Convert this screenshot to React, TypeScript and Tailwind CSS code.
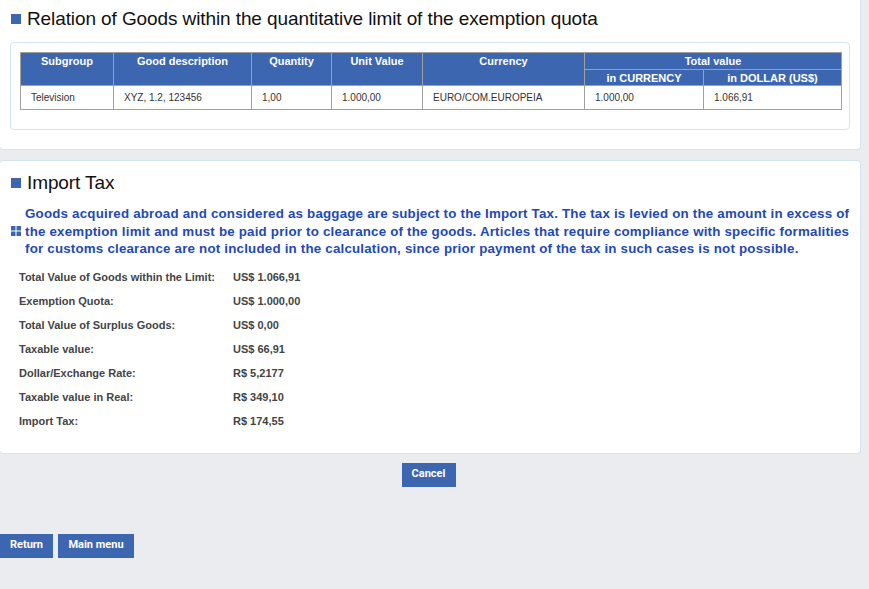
const rows = [
  ["Total Value of Goods within the Limit:", "US$ 1.066,91"],
  ["Exemption Quota:", "US$ 1.000,00"],
  ["Total Value of Surplus Goods:", "US$ 0,00"],
  ["Taxable value:", "US$ 66,91"],
  ["Dollar/Exchange Rate:", "R$ 5,2177"],
  ["Taxable value in Real:", "R$ 349,10"],
  ["Import Tax:", "R$ 174,55"],
];

function Heading({ children }: { children: string }) {
  return (
    <div className="flex items-center gap-[6px] pl-[11px]">
      <span className="w-[10px] h-[10px] bg-[#3d66b0]" />
      <h2 className="text-[19px] leading-[24px] text-[#111] tracking-[-0.1px]">{children}</h2>
    </div>
  );
}

function GridIcon() {
  return (
    <svg width="10" height="10" viewBox="0 0 10 10" className="shrink-0">
      <rect x="0" y="0" width="4.5" height="4.5" fill="#3d66b0" />
      <rect x="5.5" y="0" width="4.5" height="4.5" fill="#3d66b0" />
      <rect x="0" y="5.5" width="4.5" height="4.5" fill="#3d66b0" />
      <rect x="5.5" y="5.5" width="4.5" height="4.5" fill="#3d66b0" />
    </svg>
  );
}

export default function App() {
  const th = "border border-[#a0a0a0] text-white font-bold text-[11px] leading-[14px] text-center";
  const td = "border border-[#a0a0a0] text-[10px] text-[#333] pl-[10px] h-[24px]";
  const btn = "h-[24px] bg-[#3d66b0] text-white text-[11px] font-bold";
  return (
    <div className="w-[869px] h-[589px] bg-[#eaecef] overflow-hidden" style={{ fontFamily: '"Liberation Sans", Arial, sans-serif' }}>
      <div className="w-[861px] bg-white border border-[#d5e3ee] border-t-0 border-l-0 rounded-b-[4px] pt-[7px] pb-[19px]">
        <Heading>Relation of Goods within the quantitative limit of the exemption quota</Heading>
        <div className="mx-[10px] mt-[11px] border border-[#d5e3ee] rounded-[4px] pt-[9px] pb-[19px] px-[9px]">
          <table className="w-[821px] table-fixed border-collapse">
            <colgroup>
              <col className="w-[93px]" />
              <col className="w-[138px]" />
              <col className="w-[80px]" />
              <col className="w-[91px]" />
              <col className="w-[162px]" />
              <col className="w-[119px]" />
              <col className="w-[138px]" />
            </colgroup>
            <thead className="bg-[#3d66b0]">
              <tr className="h-[17px]">
                <th rowSpan={2} className={`${th} align-top pt-[1px]`}>Subgroup</th>
                <th rowSpan={2} className={`${th} align-top pt-[1px]`}>Good description</th>
                <th rowSpan={2} className={`${th} align-top pt-[1px]`}>Quantity</th>
                <th rowSpan={2} className={`${th} align-top pt-[1px]`}>Unit Value</th>
                <th rowSpan={2} className={`${th} align-top pt-[1px]`}>Currency</th>
                <th colSpan={2} className={th}>Total value</th>
              </tr>
              <tr className="h-[16px]">
                <th className={th}>in CURRENCY</th>
                <th className={th}>in DOLLAR (US$)</th>
              </tr>
            </thead>
            <tbody>
              <tr>
                <td className={td}>Television</td>
                <td className={td}>XYZ, 1.2, 123456</td>
                <td className={td}>1,00</td>
                <td className={td}>1.000,00</td>
                <td className={td}>EURO/COM.EUROPEIA</td>
                <td className={td}>1.000,00</td>
                <td className={td}>1.066,91</td>
              </tr>
            </tbody>
          </table>
        </div>
      </div>

      <div className="mt-[10px] w-[861px] bg-white border border-[#d5e3ee] border-l-0 rounded-[4px] pt-[10px] pb-[19px]">
        <Heading>Import Tax</Heading>
        <div className="flex items-center gap-[4px] pl-[11px] pr-[6px] mt-[10px]">
          <GridIcon />
          <p className="text-[13.33px] leading-[17.5px] font-bold text-[#2249b8] tracking-[0.2px]">
            Goods acquired abroad and considered as baggage are subject to the Import Tax. The tax is levied on the amount in excess of the exemption limit and must be paid prior to clearance of the goods. Articles that require compliance with specific formalities for customs clearance are not included in the calculation, since prior payment of the tax in such cases is not possible.
          </p>
        </div>
        <div className="mt-[8px] pl-[19px] flex flex-col">
          {rows.map(([label, value]) => (
            <div key={label} className="flex h-[24px] items-center text-[11px] font-bold text-[#444]">
              <span className="w-[214px]">{label}</span>
              <span>{value}</span>
            </div>
          ))}
        </div>
      </div>

      <div className="w-[857px] flex justify-center mt-[9px]">
        <button className={`${btn} w-[54px]`} style={{ fontFamily: 'Roboto, sans-serif' }}>Cancel</button>
      </div>

      <div className="flex gap-[5px] mt-[47px]">
        <button className={`${btn} w-[53px]`} style={{ fontFamily: 'Roboto, sans-serif' }}>Return</button>
        <button className={`${btn} w-[76px]`} style={{ fontFamily: 'Roboto, sans-serif' }}>Main menu</button>
      </div>
    </div>
  );
}
